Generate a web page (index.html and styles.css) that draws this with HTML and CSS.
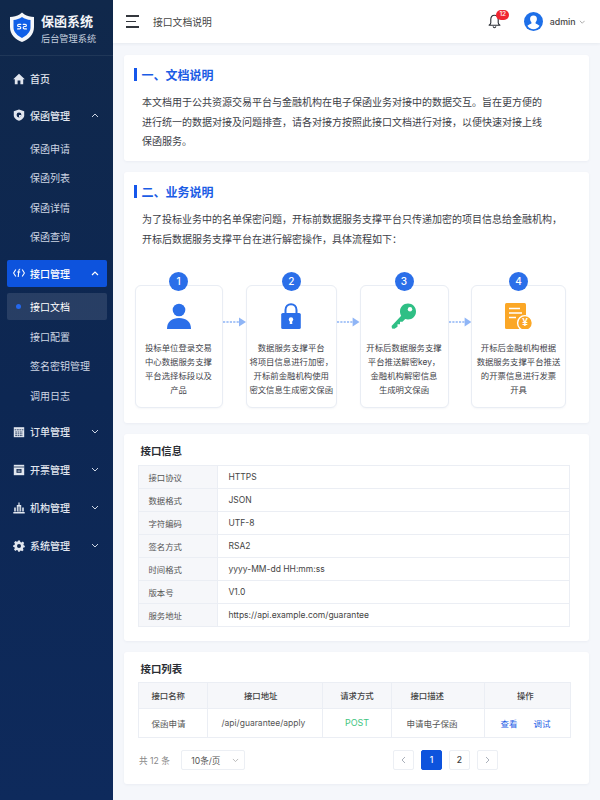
FILE: index.html
```html
<!DOCTYPE html>
<html lang="zh-CN">
<head>
<meta charset="utf-8">
<title>接口文档说明</title>
<link rel="stylesheet" href="styles.css">
</head>
<body>
<div class="app">
  <aside class="sidebar">
    <div class="brand">
      <svg class="brand-logo" viewBox="0 0 26 30" width="26" height="30">
        <path d="M13 0.5 L15.5 2.5 C18 4 21.5 5 25 5 L25 15 C25 22.5 19.5 27.5 13 30 C6.5 27.5 1 22.5 1 15 L1 5 C4.5 5 8 4 10.5 2.5 Z" fill="#f4f6fa"/>
        <path d="M13 5 C15.5 6.8 18.5 7.8 21.5 8 L21.5 15.5 C21.5 20 17.5 23.8 13 26 C8.5 23.8 4.5 20 4.5 15.5 L4.5 8 C7.5 7.8 10.5 6.8 13 5 Z" fill="#0f5fe8"/>
        <path d="M11.8 12.3 L9.8 12.3 C9 12.3 8.6 12.7 8.6 13.4 C8.6 14.1 9 14.5 9.8 14.5 L10.6 14.5 C11.4 14.5 11.8 14.9 11.8 15.7 C11.8 16.5 11.4 16.9 10.6 16.9 L8.6 16.9 M14.2 12.3 L16.2 12.3 C17 12.3 17.4 12.7 17.4 13.4 C17.4 14.1 17 14.5 16.2 14.5 L15.4 14.5 C14.6 14.5 14.2 14.9 14.2 15.7 C14.2 16.5 14.6 16.9 15.4 16.9 L17.4 16.9" fill="none" stroke="#fff" stroke-width="1.2" stroke-linecap="round" stroke-linejoin="round"/>
      </svg>
      <div class="brand-text">
        <div class="brand-title">保函系统</div>
        <div class="brand-sub">后台管理系统</div>
      </div>
    </div>
    <nav class="nav">
      <a class="nav-item nav-first">
        <svg class="nav-icon" viewBox="0 0 12 12"><path d="M6 .8 L11.8 6.2 L10.2 6.2 L10.2 11.2 L7.4 11.2 L7.4 7.6 L4.6 7.6 L4.6 11.2 L1.8 11.2 L1.8 6.2 L.2 6.2 Z" fill="#e1e6ef"/></svg>
        <span>首页</span>
      </a>
      <a class="nav-item nav-open">
        <svg class="nav-icon" viewBox="0 0 12 12"><path d="M6 .4 L11.2 2.2 L11.2 6.5 C11.2 9 8.5 10.9 6 11.8 C3.5 10.9 .8 9 .8 6.5 L.8 2.2 Z" fill="#e1e6ef"/><circle cx="6" cy="6" r="2.4" fill="#10284f"/><path d="M6 3.6 L6 6 L8.4 6 A2.4 2.4 0 0 1 6 8.4" fill="#e1e6ef"/></svg>
        <span>保函管理</span>
        <svg class="nav-chevron" viewBox="0 0 8 5"><path d="M1 4 L4 1 L7 4" fill="none" stroke="currentColor" stroke-width="1"/></svg>
      </a>
      <div class="subnav">
        <a class="sub-item">保函申请</a>
        <a class="sub-item">保函列表</a>
        <a class="sub-item">保函详情</a>
        <a class="sub-item">保函查询</a>
      </div>
      <a class="nav-item nav-open nav-active">
        <svg class="nav-icon" viewBox="0 0 12 12"><path d="M2.8 2.5 L.6 6 L2.8 9.5 M9.2 2.5 L11.4 6 L9.2 9.5 M7.2 2 C6 2 5.8 3 5.8 4 L5.2 10 M4.2 5 L7.2 5" fill="none" stroke="#fff" stroke-width="1.1"/></svg>
        <span>接口管理</span>
        <svg class="nav-chevron" viewBox="0 0 8 5"><path d="M1 4 L4 1 L7 4" fill="none" stroke="currentColor" stroke-width="1.2"/></svg>
      </a>
      <div class="subnav subnav-active">
        <a class="sub-item sub-active"><i class="sub-dot"></i>接口文档</a>
        <a class="sub-item">接口配置</a>
        <a class="sub-item">签名密钥管理</a>
        <a class="sub-item">调用日志</a>
      </div>
      <a class="nav-item nav-first">
        <svg class="nav-icon" viewBox="0 0 12 12"><path d="M.8 1.2 H11.2 V11.2 H.8 Z" fill="#e1e6ef"/><path d="M1.6 3.8 H10.4 M2.2 6 H9.8 M2.2 7.8 H9.8 M2.2 9.6 H9.8" stroke="#10284f" stroke-width=".8" stroke-dasharray="1.8 .6"/></svg>
        <span>订单管理</span>
        <svg class="nav-chevron" viewBox="0 0 8 5"><path d="M1 1 L4 4 L7 1" fill="none" stroke="currentColor" stroke-width="1"/></svg>
      </a>
      <a class="nav-item nav-closed">
        <svg class="nav-icon" viewBox="0 0 12 12"><path d="M.8 .8 H11.2 V11.2 H.8 Z" fill="#e1e6ef"/><path d="M.8 3 H11.2" stroke="#10284f" stroke-width=".8"/><path d="M3.5 5 H8.5 V8.8 H3.5 Z" fill="#10284f"/><path d="M4.5 6.2 H7.5 M4.5 7.6 H7.5" stroke="#e1e6ef" stroke-width=".6"/></svg>
        <span>开票管理</span>
        <svg class="nav-chevron" viewBox="0 0 8 5"><path d="M1 1 L4 4 L7 1" fill="none" stroke="currentColor" stroke-width="1"/></svg>
      </a>
      <a class="nav-item nav-closed">
        <svg class="nav-icon" viewBox="0 0 12 12"><path d="M.3 10 H11.7 V11.4 H.3 Z M1.2 5.5 H2.8 V9.4 H1.2 Z M9.2 5.5 H10.8 V9.4 H9.2 Z M3.8 3 H8.2 V9.4 H3.8 Z M5.4 .6 H6.6 V3 H5.4 Z" fill="#e1e6ef"/><path d="M5.3 4.5 V9.4 M6.7 4.5 V9.4" stroke="#10284f" stroke-width=".6"/></svg>
        <span>机构管理</span>
        <svg class="nav-chevron" viewBox="0 0 8 5"><path d="M1 1 L4 4 L7 1" fill="none" stroke="currentColor" stroke-width="1"/></svg>
      </a>
      <a class="nav-item nav-closed">
        <svg class="nav-icon" viewBox="0 0 12 12"><path d="M5 .4 H7 L7.3 1.9 L8.5 2.4 L9.8 1.6 L11.2 3 L10.4 4.3 L10.9 5.5 L11.8 5.8 V7.2 L10.4 7.5 L9.9 8.7 L10.6 10 L9.2 11.3 L7.9 10.5 L7 10.9 L6.8 11.8 H5.2 L4.9 10.5 L3.7 10.1 L2.4 10.9 L1 9.5 L1.8 8.2 L1.3 7.1 L.2 6.9 V5.2 L1.5 4.9 L1.9 3.7 L1.1 2.4 L2.5 1 L3.8 1.8 L4.7 1.4 Z" fill="#e1e6ef"/><circle cx="6" cy="6.1" r="2" fill="#10284f"/></svg>
        <span>系统管理</span>
        <svg class="nav-chevron" viewBox="0 0 8 5"><path d="M1 1 L4 4 L7 1" fill="none" stroke="currentColor" stroke-width="1"/></svg>
      </a>
    </nav>
  </aside>

  <div class="main">
    <header class="topbar">
      <div class="menu-toggle"><i></i><i class="short"></i><i></i></div>
      <div class="page-title">接口文档说明</div>
      <div class="top-right">
        <div class="bell">
          <svg viewBox="0 0 14 16" width="13" height="15"><path d="M7 1.2 C4.3 1.2 3 3.3 3 5.8 L3 9.3 C3 10.5 2.2 11.2 1.2 12 L12.8 12 C11.8 11.2 11 10.5 11 9.3 L11 5.8 C11 3.3 9.7 1.2 7 1.2 Z M5.5 13.3 C5.8 14.4 6.3 14.8 7 14.8 C7.7 14.8 8.2 14.4 8.5 13.3" fill="none" stroke="#2b2f36" stroke-width="1.2" stroke-linejoin="round"/></svg>
          <span class="badge">12</span>
        </div>
        <div class="user">
          <svg viewBox="0 0 20 20" width="19" height="19"><circle cx="10" cy="10" r="10" fill="#1d6fe8"/><path d="M10 3.6 C12.4 3.6 13.8 5.4 13.6 7.6 C13.5 9 13 10 12.2 10.8 L12.2 12 C13.7 12.8 15.4 13.4 16.4 14.6 C15 16.8 12.6 18.2 10 18.2 C7.4 18.2 5 16.8 3.6 14.6 C4.6 13.4 6.3 12.8 7.8 12 L7.8 10.8 C7 10 6.5 9 6.4 7.6 C6.2 5.4 7.6 3.6 10 3.6 Z" fill="#fff"/></svg>
          <span class="user-name">admin</span>
          <svg class="user-caret" viewBox="0 0 8 5"><path d="M1 1 L4 4 L7 1" fill="none" stroke="currentColor" stroke-width="1"/></svg>
        </div>
      </div>
    </header>

    <main class="content">
      <section class="card card-doc">
        <h2 class="sec-title">一、文档说明</h2>
        <p class="sec-text">本文档用于公共资源交易平台与金融机构在电子保函业务对接中的数据交互。旨在更方便的进行统一的数据对接及问题排查，请各对接方按照此接口文档进行对接，以便快速对接上线保函服务。</p>
      </section>

      <section class="card card-biz">
        <h2 class="sec-title">二、业务说明</h2>
        <p class="sec-text">为了投标业务中的名单保密问题，开标前数据服务支撑平台只传递加密的项目信息给金融机构，开标后数据服务支撑平台在进行解密操作，具体流程如下：</p>
        <div class="flow">
          <div class="step">
            <span class="step-num">1</span>
            <svg class="step-icon" viewBox="0 0 26 26"><circle cx="13" cy="7" r="6.3" fill="#2b6fe9"/><path d="M1 26 C1 18.5 6 15 13 15 C20 15 25 18.5 25 26 Z" fill="#2b6fe9"/></svg>
            <p>投标单位登录交易<br>中心数据服务支撑<br>平台选择标段以及<br>产品</p>
          </div>
          <svg class="arrow" viewBox="0 0 23 10"><path d="M0 5 H16" stroke="#8fb5f6" stroke-width="1.6" stroke-dasharray="2.2 1.2"/><path d="M16 .5 L23 5 L16 9.5 Z" fill="#8fb5f6"/></svg>
          <div class="step">
            <span class="step-num">2</span>
            <svg class="step-icon" viewBox="0 0 26 26"><path d="M7.5 11 V7 C7.5 3.5 10 1.2 13 1.2 C16 1.2 18.5 3.5 18.5 7 V11" fill="none" stroke="#2b6fe9" stroke-width="2"/><rect x="3.2" y="10" width="19.6" height="16" rx="1.6" fill="#2b6fe9"/><circle cx="13" cy="16.5" r="2.2" fill="#fff"/><path d="M12 17 H14 L14.3 21 H11.7 Z" fill="#fff"/></svg>
            <p>数据服务支撑平台<br>将项目信息进行加密，<br>开标前金融机构使用<br>密文信息生成密文保函</p>
          </div>
          <svg class="arrow" viewBox="0 0 23 10"><path d="M0 5 H16" stroke="#8fb5f6" stroke-width="1.6" stroke-dasharray="2.2 1.2"/><path d="M16 .5 L23 5 L16 9.5 Z" fill="#8fb5f6"/></svg>
          <div class="step">
            <span class="step-num">3</span>
            <svg class="step-icon" viewBox="0 0 26 26"><path d="M17 0.5 C21.5 0.5 25 4 25 8.5 C25 13 21.5 16.5 17 16.5 C16 16.5 15 16.3 14.2 16 L11.5 18.7 L9 18.7 L9 21.2 L6.5 21.2 L6.5 23.7 L3.5 25.8 L1 25.5 L.6 23 L10.2 12.8 C9.5 11.7 9 10.2 9 8.5 C9 4 12.5 .5 17 .5 Z" fill="#2fbf85"/><circle cx="19" cy="6.3" r="2.2" fill="#fff"/></svg>
            <p>开标后数据服务支撑<br>平台推送解密key，<br>金融机构解密信息<br>生成明文保函</p>
          </div>
          <svg class="arrow" viewBox="0 0 23 10"><path d="M0 5 H16" stroke="#8fb5f6" stroke-width="1.6" stroke-dasharray="2.2 1.2"/><path d="M16 .5 L23 5 L16 9.5 Z" fill="#8fb5f6"/></svg>
          <div class="step">
            <span class="step-num">4</span>
            <svg class="step-icon step-icon-wide" viewBox="0 0 28 26"><rect x="0" y="0" width="21" height="26" rx="1.5" fill="#fba726"/><path d="M4 5.5 H15 M4 10 H17 M4 14.5 H11" stroke="#fff" stroke-width="1.7"/><circle cx="20" cy="20" r="7.4" fill="#fba726" stroke="#fff" stroke-width="1.4"/><text class="yen" x="20" y="23.4">¥</text></svg>
            <p>开标后金融机构根据<br>数据服务支撑平台推送<br>的开票信息进行发票<br>开具</p>
          </div>
        </div>
      </section>

      <section class="card card-info">
        <h3 class="tbl-title">接口信息</h3>
        <table class="info-table">
          <tr><th>接口协议</th><td>HTTPS</td></tr>
          <tr><th>数据格式</th><td>JSON</td></tr>
          <tr><th>字符编码</th><td>UTF-8</td></tr>
          <tr><th>签名方式</th><td>RSA2</td></tr>
          <tr><th>时间格式</th><td>yyyy-MM-dd HH:mm:ss</td></tr>
          <tr><th>版本号</th><td>V1.0</td></tr>
          <tr><th>服务地址</th><td>https://api.example.com/guarantee</td></tr>
        </table>
      </section>

      <section class="card card-list">
        <h3 class="tbl-title">接口列表</h3>
        <table class="list-table">
          <colgroup><col class="c1"><col class="c2"><col class="c3"><col class="c4"><col class="c5"></colgroup>
          <tr class="list-head">
            <th class="p-name">接口名称</th><th class="p-url-h">接口地址</th><th class="p-method">请求方式</th><th class="p-desc-h">接口描述</th><th class="p-ops-h">操作</th>
          </tr>
          <tr class="list-row">
            <td class="p-name">保函申请</td><td class="p-url">/api/guarantee/apply</td><td class="p-method post">POST</td><td class="p-desc">申请电子保函</td><td class="p-ops"><a class="link">查看</a><a class="link">调试</a></td>
          </tr>
        </table>
        <div class="pager">
          <span class="total">共 12 条</span>
          <div class="page-size"><span>10条/页</span><svg class="caret" viewBox="0 0 8 5"><path d="M1 1 L4 4 L7 1" fill="none" stroke="currentColor" stroke-width=".9"/></svg></div>
          <div class="pages">
            <a class="pg pg-muted"><svg viewBox="0 0 5 8" width="5" height="8"><path d="M4 1 L1 4 L4 7" fill="none" stroke="currentColor"/></svg></a>
            <a class="pg pg-on">1</a>
            <a class="pg">2</a>
            <a class="pg pg-muted"><svg viewBox="0 0 5 8" width="5" height="8"><path d="M1 1 L4 4 L1 7" fill="none" stroke="currentColor"/></svg></a>
          </div>
        </div>
      </section>
    </main>
  </div>
</div>
</body>
</html>
```
FILE: styles.css
```css
* { box-sizing: border-box; }
html, body { margin: 0; height: 100%; }
body {
  font-family: Inter, "Noto Sans CJK SC", sans-serif;
  font-size: 10px;
  color: #333;
  background: #f5f7fb;
  overflow: hidden;
}
p, h2, h3 { margin: 0; }
a { display: block; }
.app { display: flex; width: 600px; height: 800px; }

/* sidebar */
.sidebar {
  width: 113px;
  flex: none;
  background: linear-gradient(180deg, #10284b 0%, #0d2753 50%, #0e2a5c 100%);
  color: #e1e6ef;
}
.brand {
  height: 55.5px;
  display: flex;
  align-items: center;
  padding: 0 0 0 9px;
  gap: 6px;
  border-bottom: 1px solid rgba(255, 255, 255, .07);
}
.brand-logo { flex: none; }
.brand-text { padding-top: 4px; }
.brand-title { font-size: 13px; line-height: 17px; font-weight: 700; color: #f2f4f8; }
.brand-sub { font-size: 9.2px; line-height: 13px; margin-top: 2px; color: #c4cede; }
.nav { padding: 9.5px 6.5px 0; }
.nav-item {
  height: 27px;
  display: flex;
  align-items: center;
  padding: 0 8px 0 6px;
  border-radius: 2px;
  font-weight: 500;
}
.nav-open { margin-top: 9.5px; }
.nav-closed { margin-top: 11px; }
.nav-first { margin-top: 0; }
.subnav + .nav-first { margin-top: 9px; }
.subnav + .nav-open { margin-top: 9.5px; }
.nav-icon { width: 12px; height: 12px; flex: none; margin-right: 5.5px; }
.nav-chevron { width: 8px; height: 5px; margin-left: auto; color: #cdd6e4; }
.nav-active { background: #0d53dd; color: #fff; }
.nav-active .nav-chevron { color: #fff; }
.subnav { margin-top: 6px; display: flex; flex-direction: column; gap: 2.6px; }
.subnav-active { margin-top: 6.5px; }
.sub-item {
  height: 27px;
  display: flex;
  align-items: center;
  padding-left: 23.5px;
  border-radius: 2px;
  color: #cdd6e4;
}
.sub-active { background: rgba(255, 255, 255, .11); color: #fff; padding-left: 7px; }
.sub-dot {
  width: 5px; height: 5px; border-radius: 50%;
  background: #2468ee;
  margin: 0 9px 0 2.5px;
  flex: none;
}

/* main */
.main { flex: 1; min-width: 0; display: flex; flex-direction: column; }
.topbar {
  height: 43px;
  flex: none;
  display: flex;
  align-items: center;
  padding: 0 15px 0 13px;
  background: #fff;
  box-shadow: 0 1px 3px rgba(30, 50, 90, .07);
}
.menu-toggle { width: 13px; display: flex; flex-direction: column; gap: 3.8px; }
.menu-toggle i { display: block; height: 1.5px; background: #33373d; }
.menu-toggle .short { width: 10px; }
.page-title { margin-left: 14px; font-size: 9.8px; color: #444; }
.top-right { margin-left: auto; display: flex; align-items: center; }
.bell { position: relative; display: flex; margin-right: 23px; }
.badge {
  position: absolute;
  left: 8px;
  top: -4px;
  width: 13px;
  height: 9.5px;
  border-radius: 5px;
  background: #f0242f;
  color: #fff;
  font-size: 6.5px;
  line-height: 9.5px;
  text-align: center;
  font-weight: 500;
}
.user { display: flex; align-items: center; }
.user-name { margin-left: 6.5px; font-size: 8.8px; color: #444; font-weight: 500; }
.user-caret { width: 6.5px; height: 4px; margin-left: 3px; color: #999; }

.content {
  flex: 1;
  padding: 12px 11px 0;
  display: flex;
  flex-direction: column;
  gap: 11.5px;
}
.card {
  background: #fff;
  border-radius: 3px;
  padding: 9px 20px 0 10.5px;
  box-shadow: 0 1px 3px rgba(30, 50, 90, .05);
}
.card-doc { height: 105.5px; }
.card-biz { height: 250.5px; }
.card-info { height: 206.5px; padding-top: 1px; padding-right: 19.5px; padding-left: 14px; }
.card-list { height: 132px; padding-top: 3px; padding-right: 19.5px; padding-left: 14px; }

.sec-title {
  height: 20px;
  display: flex;
  align-items: center;
  font-size: 12px;
  font-weight: 600;
  color: #1b5ce5;
  padding-left: 7px;
  position: relative;
}
.sec-title::before {
  content: "";
  position: absolute;
  left: -0.5px;
  top: 3.5px;
  width: 2.5px;
  height: 13px;
  background: #1557eb;
}
.sec-text {
  margin-top: 9px;
  margin-left: 7.5px;
  line-height: 19.6px;
  color: #3c4047;
}
.card-doc .sec-text { width: 405px; }

/* flow */
.flow {
  margin-top: 36px;
  display: grid;
  grid-template-columns: 88px 23px 91.5px 22.5px 89px 22.5px 95px;
  align-items: start;
}
.step {
  position: relative;
  height: 123px;
  border: 1px solid #e9edf4;
  border-radius: 6px;
  background: #fff;
  padding-top: 17px;
  text-align: center;
  box-shadow: 0 1px 2px rgba(30, 50, 90, .04);
}
.step p { margin-top: 11.5px; font-size: 8.4px; line-height: 14px; color: #3f434a; white-space: nowrap; }
.step-num {
  position: absolute;
  left: 50%;
  top: -14px;
  width: 19px;
  height: 19px;
  margin-left: -9.5px;
  border-radius: 50%;
  background: #2b6fe9;
  color: #fff;
  font-size: 10px;
  line-height: 19px;
  text-align: center;
  font-weight: 500;
}
.step-icon { display: block; width: 26px; height: 26px; margin: 0 auto; }
.step-icon-wide { width: 28px; }
.yen { font-size: 10px; font-weight: 700; fill: #fff; text-anchor: middle; font-family: "Liberation Sans", sans-serif; }
.arrow { width: 100%; height: 10px; display: block; margin-top: 32px; }

/* tables */
.tbl-title {
  height: 30px;
  display: flex;
  align-items: center;
  font-size: 10.4px;
  font-weight: 600;
  color: #2a2d33;
  padding-left: 2.5px;
}
table { border-collapse: collapse; table-layout: fixed; width: 431.5px; }
th, td { border: 1px solid #ebeef4; font-size: 8.4px; font-weight: 400; padding: 0; text-align: left; color: #555; }
.info-table tr { height: 23px; }
.info-table th { width: 79px; background: #f6f7fa; padding-left: 9.5px; }
.info-table td { padding-left: 10.5px; font-size: 8.5px; color: #444; }

.card-list .tbl-title { height: 27px; }
.c1 { width: 69px; } .c2 { width: 115px; } .c3 { width: 69px; } .c4 { width: 93px; } .c5 { width: 85.5px; }
.list-head { height: 25.5px; }
.list-head th { background: #f6f7fa; font-weight: 500; color: #444; }
.list-row { height: 29px; }
.list-row td { color: #555; font-size: 8.5px; }
.p-name { padding-left: 12.5px; }
.p-url-h { padding-left: 36px; }
.p-url { padding-left: 13.5px; }
.p-method { text-align: center; }
.list-row .post { color: #3fc57f; font-size: 9px; }
.p-desc-h { padding-left: 18.5px; }
.p-desc { padding-left: 14.5px; }
.p-ops-h { padding-left: 32px; }
.p-ops { padding-left: 15.5px; }
.p-ops .link { display: inline-block; color: #1f62e6; }
.p-ops .link + .link { margin-left: 16px; }

.pager { margin-top: 12.5px; display: flex; align-items: center; height: 20px; }
.total { font-size: 8.6px; color: #888; padding-left: 1px; }
.page-size {
  margin-left: 11px;
  width: 64px;
  height: 20px;
  border: 1px solid #eceff4;
  border-radius: 2px;
  display: flex;
  align-items: center;
  padding: 0 5px 0 9.5px;
  font-size: 8.6px;
  color: #555;
}
.caret { width: 7px; height: 4.5px; margin-left: auto; color: #aaa; }
.pages { margin-left: auto; margin-right: 71.5px; display: flex; gap: 7px; }
.pg {
  width: 21px;
  height: 20px;
  border: 1px solid #eceff4;
  border-radius: 2px;
  display: flex;
  align-items: center;
  justify-content: center;
  font-size: 8.6px;
  font-weight: 500;
  color: #444;
  background: #fff;
}
.pg-muted { color: #aab0ba; }
.pg-on { background: #0d53dd; border-color: #0d53dd; color: #fff; }
```
